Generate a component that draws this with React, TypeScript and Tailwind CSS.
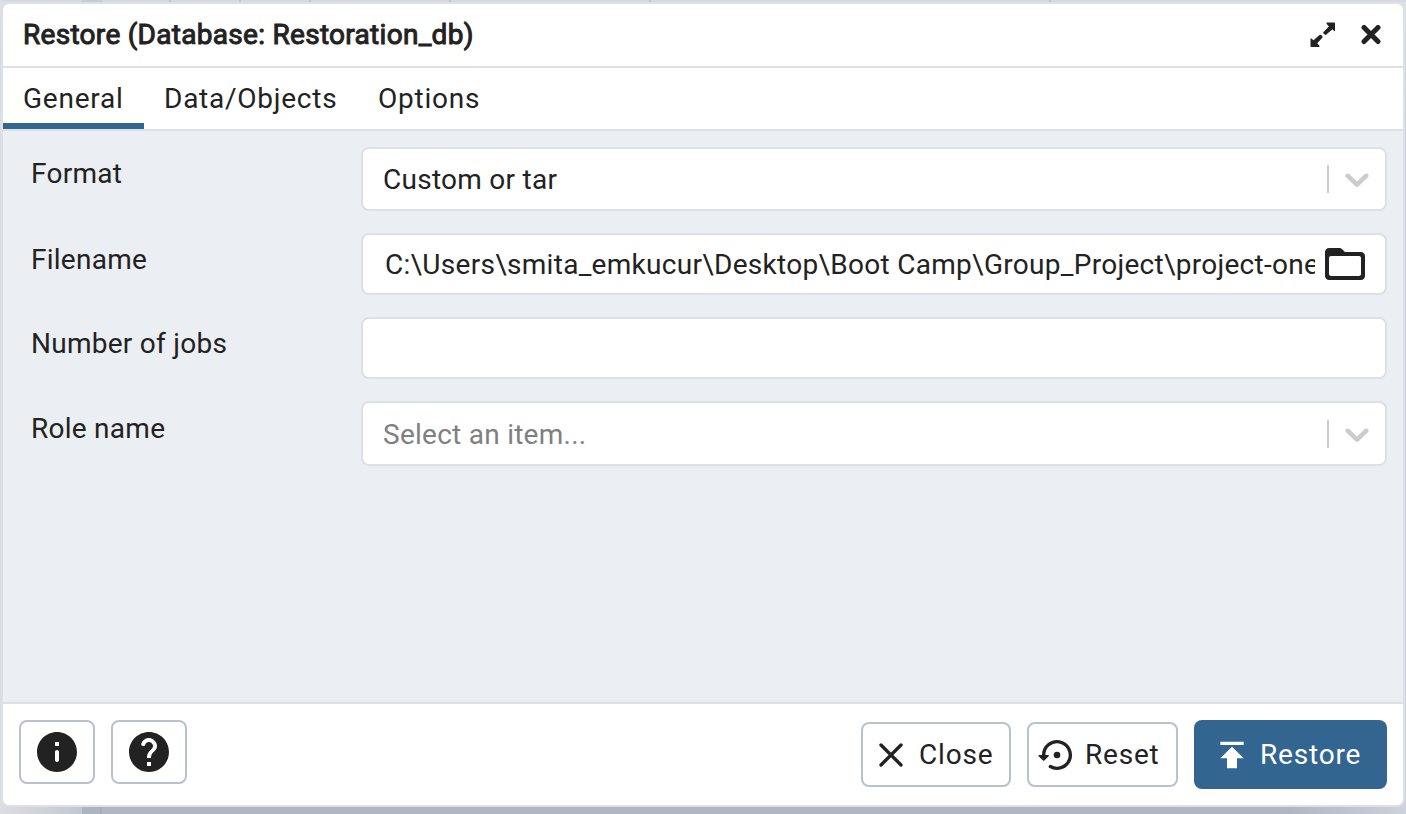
import type { ReactNode } from "react";
import { MdPublish } from "react-icons/md";

function Chevron() {
  return (
    <svg viewBox="0 0 20 20" className="h-10 w-10 fill-[#cccccc]">
      <path d="M4.516 7.548c0.436-0.446 1.043-0.481 1.576 0l3.908 3.747 3.908-3.747c0.533-0.481 1.141-0.446 1.574 0 0.436 0.445 0.408 1.197 0 1.615-0.406 0.418-4.695 4.502-4.695 4.502-0.217 0.223-0.502 0.335-0.787 0.335s-0.57-0.112-0.789-0.335c0 0-4.287-4.084-4.695-4.502s-0.436-1.17 0-1.615z" />
    </svg>
  );
}

function Glyph({ d, className = "" }: { d: string; className?: string }) {
  return (
    <svg viewBox="0 0 24 24" className={`h-12 w-12 shrink-0 fill-[#222222] ${className}`}>
      <path d={d} fillRule="evenodd" />
    </svg>
  );
}

const INFO =
  "M12 2C6.48 2 2 6.48 2 12s4.48 10 10 10 10-4.48 10-10S17.52 2 12 2zm0 15c-.55 0-1-.45-1-1v-4c0-.55.45-1 1-1s1 .45 1 1v4c0 .55-.45 1-1 1zm1-8h-2V7h2v2z";
const HELP =
  "M12 2C6.48 2 2 6.48 2 12s4.48 10 10 10 10-4.48 10-10S17.52 2 12 2zm1 17h-2v-2h2v2zm2.07-7.75l-.9.92c-.5.51-.86.97-1.04 1.69-.08.32-.13.68-.13 1.14h-2v-.5c0-.46.08-.9.22-1.31.2-.58.53-1.1.95-1.52l1.24-1.26c.46-.44.68-1.1.55-1.8-.13-.72-.69-1.33-1.39-1.53-1.11-.31-2.14.32-2.47 1.27-.12.37-.43.65-.82.65h-.3C8.4 9 8 8.44 8.16 7.88c.43-1.47 1.68-2.59 3.23-2.83 1.52-.24 2.97.55 3.87 1.8 1.18 1.63.83 3.38-.19 4.4z";
const FOLDER =
  "M20 6h-8l-1.410-1.410C10.210 4.210 9.700 4 9.170 4H4c-1.100 0-2 .9-2 2v12c0 1.100.9 2 2 2h16c1.100 0 2-.9 2-2V8c0-1.100-.9-2-2-2zM19 18H5c-.55 0-1-.45-1-1V9c0-.55.45-1 1-1h14c.55 0 1 .45 1 1v8c0 .55-.45 1-1 1z";

function CloseIcon() {
  return (
    <svg viewBox="0 0 24 24" className="mr-2 h-10 w-10 shrink-0 fill-none stroke-[#222222] stroke-2">
      <path d="M6 6l12 12M18 6L6 18" strokeLinecap="round" />
    </svg>
  );
}

function ResetIcon() {
  return (
    <svg viewBox="0 0 24 24" className="mr-2 h-10 w-10 shrink-0 fill-[#222222]">
      <path
        d="M4 12a8 8 0 1 1 4 6.930"
        fill="none"
        stroke="#222222"
        strokeWidth="2"
        strokeLinecap="round"
      />
      <path d="M1.300 12h5.400q.8 0 .3.700L4.400 15.300q-.4.400-.8 0L1 12.700q-.5-.7.300-.7z" />
      <circle cx="12" cy="12" r="2" />
    </svg>
  );
}

function Row({
  label,
  className,
  labelClass = "pt-[11px]",
  children,
}: {
  label: string;
  className: string;
  labelClass?: string;
  children?: ReactNode;
}) {
  return (
    <div className="flex tracking-[0.26px]">
      <div className={`w-[358px] shrink-0 pl-7 leading-8 ${labelClass}`}>{label}</div>
      <div className={`flex min-w-0 flex-1 items-center rounded-lg border-2 border-[#dde0e6] bg-white pl-5 ${className}`}>
        {children}
      </div>
    </div>
  );
}

function SelectEnd() {
  return (
    <div className="ml-auto flex items-center gap-2 pr-2">
      <span className="h-7 w-0.5 bg-[#cccccc]" />
      <Chevron />
    </div>
  );
}

const outlined = "flex items-center rounded-lg border-2 border-[#bac1cd] bg-white";
const ticks = ["w-[89px]", "w-[70px]", "w-[70px]", "w-[140px]", "w-[200px]", "w-[400px]"];

export default function App() {
  return (
    <div className="h-[814px] w-[1406px] overflow-hidden bg-[linear-gradient(180deg,#e0e1e7_0px,#d5d8df_50px,transparent_130px),linear-gradient(90deg,#dcdde2_0px,#c3c7d0_82px,#adb4c1_82px,#adb4c1_100px,#a6adba_100px,#a6adba_102px,#b0b6c2_102px,#b0b6c2_1290px,#cfd1dc_1406px)] pl-px font-['Roboto',sans-serif] text-[28px] text-[#222222]">
      <div className="flex h-0.5 bg-[#d6d9df] pl-[81px]">
        {ticks.map((w, i) => (
          <span key={i} className={`border-r-2 border-[#bfc3cd] ${w} ${i === 0 ? "bg-[linear-gradient(90deg,#c6cbd6_20px,transparent_20px)]" : ""}`} />
        ))}
      </div>
      <div className="flex h-[805px] w-[1404px] flex-col overflow-hidden rounded-lg border-2 border-[#dde0e6] bg-white">
        <header className="flex h-16 shrink-0 items-center justify-between border-b-2 border-[#dde0e6] pl-5 pr-[22px]">
          <h1 className="text-[28px] font-normal leading-8 tracking-[0.29px] [-webkit-text-stroke:1px_#222222]">
            Restore (Database: Restoration_db)
          </h1>
          <div className="flex items-center gap-[25px]">
            <svg viewBox="0 0 26 26" className="h-[26px] w-[26px] fill-[#222222]">
              <path d="M17 .5h7.200q.8 0 .8.800V8.500q0 1.200-.9.400L22.500 7.200l-6.200 5.400q-.8.700-1.600 0l-1.200-1.200q-.7-.8 0-1.500L18.900 4.500 16.600 1.800Q16 .5 17 .5Z" />
              <path d="M9 25H1.300q-.8 0-.8-.8V17q0-1.200.9-.4L3.500 18.300l6-5.200q.8-.7 1.600 0l1.200 1.200q.7.8 0 1.500L7.200 21.200 9.400 23.700Q10 25 9 25Z" />
            </svg>
            <svg viewBox="0 0 20 20" className="h-5 w-5 fill-none stroke-[#222222] stroke-[5]">
              <path d="M3 2.500l14 14M17 2.500L3 16.500" strokeLinecap="round" />
            </svg>
          </div>
        </header>
        <nav className="flex h-[63px] shrink-0 border-b-2 border-[#dde0e6] leading-[61px] tracking-[0.75px]">
          <div className="w-[141px] border-b-[6px] border-[#326690] pl-5">General</div>
          <div className="w-[214px] pl-5">Data/Objects</div>
          <div className="pl-5">Options</div>
        </nav>
        <main className="flex min-h-0 flex-1 flex-col bg-[#ebeef3] pr-4 pt-4">
          <div className="flex flex-col gap-[22px]">
            <Row label="Format" className="h-16">
              <span className="pt-0.5">Custom or tar</span>
              <SelectEnd />
            </Row>
            <Row label="Filename" className="h-[62px]">
              <span className="ml-0.5 w-[930px] overflow-hidden whitespace-nowrap pt-0.5 tracking-[0.29px]">
                C:\Users\smita_emkucur\Desktop\Boot Camp\Group_Project\project-one
              </span>
              <Glyph d={FOLDER} className="ml-1.5" />
            </Row>
            <Row label="Number of jobs" className="h-[62px]" />
            <Row label="Role name" className="h-[65px]" labelClass="pt-3">
              <span className="pt-0.5 text-[#808080]">Select an item...</span>
              <SelectEnd />
            </Row>
          </div>
        </main>
        <footer className="flex h-[103px] shrink-0 items-start border-t-2 border-[#dde0e6] px-4 pt-4 tracking-[0.8px]">
          <button className={`${outlined} h-16 w-[76px] justify-center`}>
            <Glyph d={INFO} />
          </button>
          <button className={`${outlined} ml-4 h-16 w-[76px] justify-center`}>
            <Glyph d={HELP} />
          </button>
          <button className={`${outlined} ml-auto mt-0.5 h-[65px] w-[150px] pl-2`}>
            <CloseIcon />
            Close
          </button>
          <button className={`${outlined} ml-4 mt-0.5 h-[65px] w-[151px] pl-2`}>
            <ResetIcon />
            Reset
          </button>
          <button className="ml-4 flex h-[69px] w-[193px] items-center rounded-lg bg-[#326690] pl-[18px] text-white">
            <MdPublish className="mr-2 h-10 w-10 shrink-0" />
            Restore
          </button>
        </footer>
      </div>
    </div>
  );
}
